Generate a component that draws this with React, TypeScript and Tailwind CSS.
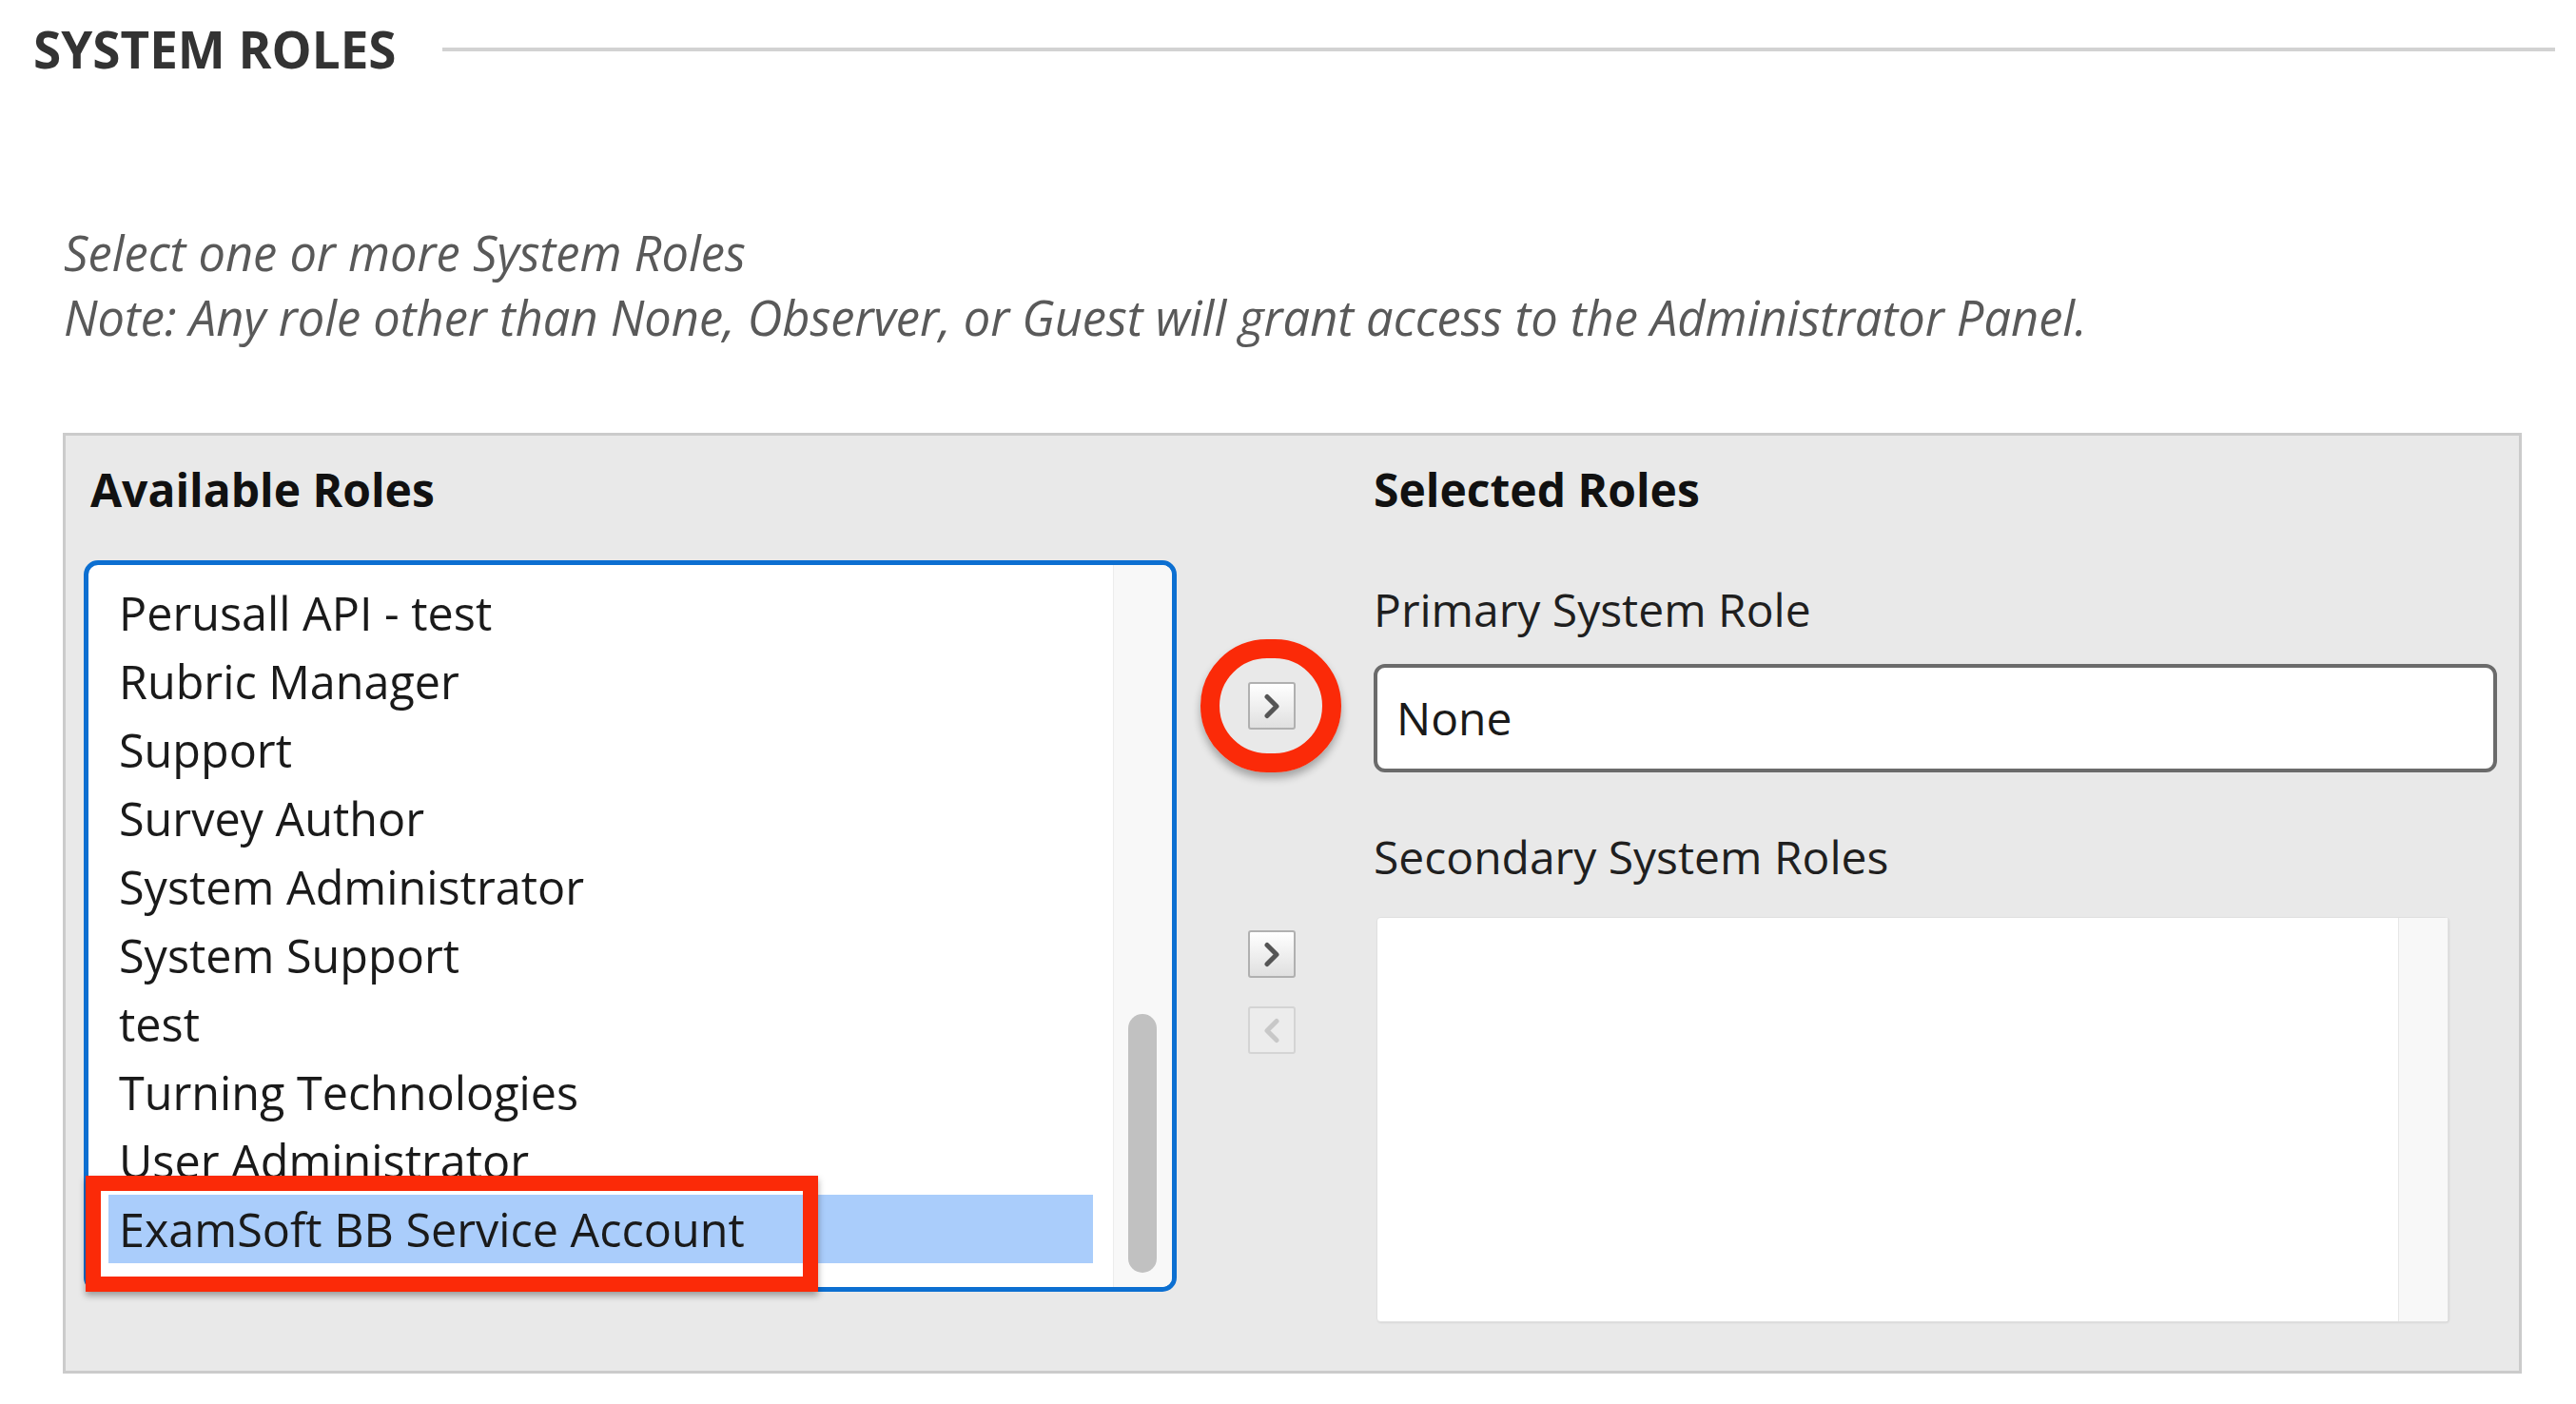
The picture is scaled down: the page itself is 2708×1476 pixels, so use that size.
import React from 'react';

const availableRoles = [
  'Perusall API - test',
  'Rubric Manager',
  'Support',
  'Survey Author',
  'System Administrator',
  'System Support',
  'test',
  'Turning Technologies',
  'User Administrator',
  'ExamSoft BB Service Account',
];

function Chevron({ dir, color }: { dir: 'left' | 'right'; color: string }) {
  const points = dir === 'right' ? '4,3.5 14,13.5 4,23.5' : '14,3.5 4,13.5 14,23.5';
  return (
    <svg width="18" height="27" viewBox="0 0 18 27" fill="none">
      <polyline points={points} stroke={color} strokeWidth="5" strokeLinecap="round" strokeLinejoin="round" />
    </svg>
  );
}

function MoveButton({ dir, disabled }: { dir: 'left' | 'right'; disabled?: boolean }) {
  return (
    <button
      type="button"
      disabled={disabled}
      className={
        disabled
          ? 'w-[50px] h-[50px] flex items-center justify-center rounded-[3px] border-2 border-[#d4d4d4] bg-[#ececec]'
          : 'w-[50px] h-[50px] flex items-center justify-center rounded-[3px] border-2 border-[#b0b0b0] bg-linear-to-b from-white to-[#e0e0e0]'
      }
    >
      <Chevron dir={dir} color={disabled ? '#c8c8c8' : '#555555'} />
    </button>
  );
}

export default function App() {
  return (
    <div className="relative w-[2708px] h-[1476px] overflow-hidden bg-white font-['Open_Sans',sans-serif]">
      {/* section header */}
      <div className="flex items-center pl-[35px] pr-[22px] pt-[19px]">
        <h2 className="text-[53px] leading-[66px] font-bold text-[#333333] whitespace-nowrap">SYSTEM ROLES</h2>
        <div className="ml-[48px] flex-1 h-[4px] bg-[#d2d2d2]" />
      </div>

      <div className="mt-[147px] pl-[67px] italic text-[50.6px] leading-[68px] text-[#595959]">
        <p>Select one or more System Roles</p>
        <p>Note: Any role other than None, Observer, or Guest will grant access to the Administrator Panel.</p>
      </div>

      {/* picker panel */}
      <div className="mt-[87px] ml-[66px] w-[2585px] h-[989px] border-[3px] border-[#cbcbcb] bg-[#e9e9e9] flex pl-[19px] pt-[27px]">
        <div className="w-[1149px] flex flex-col">
          <h3 className="ml-[7px] text-[48px] leading-[60px] font-bold text-[#111111]">Available Roles</h3>
          <div className="mt-[44px] h-[769px] flex overflow-hidden rounded-[15px] border-[5px] border-[#0c6fd1] bg-white">
            <ul className="flex-1 pt-[14px] px-[21px] text-[48.5px] leading-[72px] text-[#1a1a1a]">
              {availableRoles.map((role, i) => (
                <li
                  key={role}
                  className={
                    i === availableRoles.length - 1
                      ? 'h-[72px] pl-[11px] whitespace-nowrap bg-[#aacdfb]'
                      : 'h-[72px] pl-[11px] whitespace-nowrap'
                  }
                >
                  {role}
                </li>
              ))}
            </ul>
            <div className="w-[62px] flex flex-col justify-end pb-[15px] pl-[15px] bg-[#f8f8f8] border-l border-[#ececec]">
              <div className="w-[30px] h-[272px] rounded-full bg-[#c1c1c1]" />
            </div>
          </div>
        </div>

        <div className="w-[207px] flex flex-col pl-[75px] pt-[232px]">
          <MoveButton dir="right" />
          <div className="mt-[211px]">
            <MoveButton dir="right" />
          </div>
          <div className="mt-[30px]">
            <MoveButton dir="left" disabled />
          </div>
        </div>

        <div className="w-[1181px] flex flex-col">
          <h3 className="text-[48px] leading-[60px] font-bold text-[#111111]">Selected Roles</h3>
          <p className="mt-[66px] text-[48px] leading-[60px] text-[#1f1f1f]">Primary System Role</p>
          <div className="mt-[27px] h-[114px] flex items-center pl-[20px] rounded-[12px] border-[4px] border-[#6b6b6b] bg-white text-[48px] text-[#1a1a1a]">
            None
          </div>
          <p className="mt-[59px] text-[48px] leading-[60px] text-[#1f1f1f]">Secondary System Roles</p>
          <div className="mt-[33px] ml-[3px] w-[1127px] h-[426px] flex justify-end rounded-[4px] border border-[#e0e0e0] bg-white shadow-[1px_1px_2px_rgba(0,0,0,0.08)]">
            <div className="w-[52px] bg-[#f8f8f8] border-l border-[#e6e6e6]" />
          </div>
        </div>
      </div>

      {/* annotations */}
      <div className="absolute left-[90px] top-[1236px] w-[770px] h-[122px] border-[16px] border-[#fb2a08] shadow-[0_4px_7px_rgba(0,0,0,0.35)]" />
      <div className="absolute left-[1262px] top-[672px] w-[148px] h-[140px] rounded-full border-[20px] border-[#fb2a08] shadow-[0_6px_8px_rgba(0,0,0,0.3)]" />
    </div>
  );
}
